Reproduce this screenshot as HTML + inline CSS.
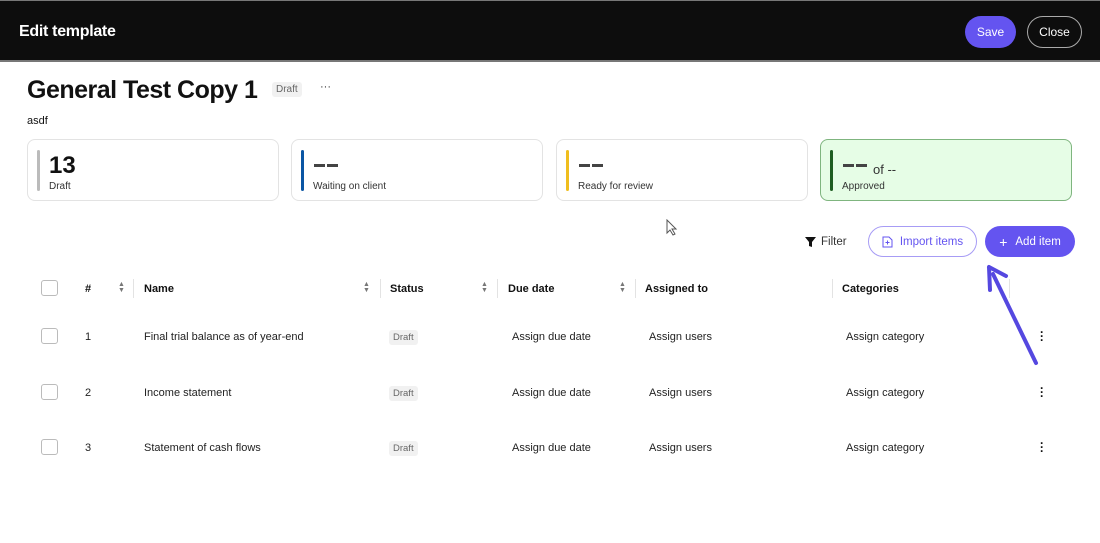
<!DOCTYPE html>
<html><head><style>
*{box-sizing:border-box;margin:0;padding:0}
body{width:1100px;height:543px;background:#fff;font-family:"Liberation Sans",sans-serif;color:#111;position:relative;overflow:hidden}
.hdr{position:absolute;left:0;top:0;width:1100px;height:62px;background:#0d0d0d;border-top:1px solid #777;border-bottom:2px solid #777}
.hdr h1{position:absolute;left:19px;top:22px;font-size:16px;color:#fff;font-weight:bold;letter-spacing:-0.3px}
.btn{position:absolute;border-radius:16px;font-size:12px;display:flex;align-items:center;justify-content:center}
.a{position:absolute}
.card{position:absolute;top:139px;width:252px;height:62px;border:1px solid #e3e3e3;border-radius:8px;background:#fff}
.card .bar{position:absolute;left:9px;top:10px;width:3px;height:41px;border-radius:2px}
.card .v{position:absolute;left:21px;top:12px;font-size:24px;font-weight:bold}
.card .l{position:absolute;left:21px;top:41px;font-size:10px;color:#333}
.dash{position:absolute;left:22px;top:24px;width:11px;height:3px;background:#444;box-shadow:13px 0 0 #444}
.th{position:absolute;top:283px;font-size:11px;font-weight:bold}
.cb{position:absolute;left:41px;width:17px;height:16px;border:1px solid #bbb;border-radius:3px}
.td{position:absolute;font-size:11px;color:#222}
.tag{position:absolute;left:389px;font-size:9.5px;color:#666;background:#f1f1f1;padding:2px 4px;border-radius:3px}
.sep{position:absolute;top:279px;width:1px;height:19px;background:#e3e3e3}
.sort{position:absolute;top:282px;font-size:7px;line-height:6px;color:#777}
.dots{position:absolute;left:1040px;font-size:12px;font-weight:bold;line-height:4px;width:4px;text-align:center}
</style></head><body>
<div class="hdr"><h1>Edit template</h1>
<div class="btn" style="left:965px;top:15px;width:51px;height:32px;background:#6454f0;color:#fff">Save</div>
<div class="btn" style="left:1027px;top:15px;width:55px;height:32px;border:1px solid #aaa;color:#fff">Close</div>
</div>
<div class="a" style="left:27px;top:76px;font-size:25px;font-weight:bold;letter-spacing:-0.5px">General Test Copy 1</div>
<div class="a" style="left:272px;top:82px;font-size:10px;color:#666;background:#f1f1f1;padding:2px 4px;border-radius:3px">Draft</div>
<div class="a" style="left:320px;top:81px;font-size:11px;color:#333">···</div>
<div class="a" style="left:27px;top:115px;font-size:11px">asdf</div>

<div class="card" style="left:27px"><div class="bar" style="background:#bbb"></div><div class="v">13</div><div class="l">Draft</div></div>
<div class="card" style="left:291px"><div class="bar" style="background:#0b56a4"></div><div class="dash"></div><div class="l">Waiting on client</div></div>
<div class="card" style="left:556px"><div class="bar" style="background:#f0be1e"></div><div class="dash"></div><div class="l">Ready for review</div></div>
<div class="card" style="left:820px;background:#e6fde6;border-color:#7fb57f"><div class="bar" style="background:#1e5d21"></div><div class="dash"></div><div class="a" style="left:52px;top:22px;font-size:13px;color:#333">of --</div><div class="l">Approved</div></div>

<svg class="a" style="left:665px;top:219px" width="14" height="18" viewBox="0 0 14 18"><path d="M2 1 L2 14 L5 11 L8 16 L10 15 L7 10 L11 10 Z" fill="#fff" stroke="#555"/></svg>

<svg class="a" style="left:805px;top:237px" width="11" height="10" viewBox="0 0 11 10"><path d="M0 0H11L7 5V10L4 9V5Z" fill="#111"/></svg>
<div class="a" style="left:821px;top:236px;font-size:11.5px;color:#333">Filter</div>
<div class="btn" style="left:868px;top:226px;width:109px;height:31px;border:1px solid #a79cf5;color:#6454f0;font-size:11.5px"><svg width="11" height="12" viewBox="0 0 11 12" style="margin-right:7px"><path d="M1 1H7L10 4V11H1Z M5.5 4.5V8.5 M3.5 6.5H7.5" fill="none" stroke="#6454f0"/></svg>Import items</div>
<div class="btn" style="left:985px;top:226px;width:90px;height:31px;background:#6454f0;color:#fff;font-size:11.5px"><span style="margin-right:8px;font-size:14px">+</span>Add item</div>

<svg class="a" style="left:980px;top:262px" width="60" height="110" viewBox="0 0 60 110"><path d="M56 101 L13 12" stroke="#5548e0" stroke-width="4" stroke-linecap="round"/><path d="M9 5 L10 28 M9 5 L26 14" stroke="#5548e0" stroke-width="4" stroke-linecap="round"/></svg>

<div class="cb" style="top:280px"></div>
<div class="th" style="left:85px">#</div><div class="sort" style="left:118px">▲<br>▼</div><div class="sep" style="left:133px"></div>
<div class="th" style="left:144px">Name</div><div class="sort" style="left:363px">▲<br>▼</div><div class="sep" style="left:380px"></div>
<div class="th" style="left:390px">Status</div><div class="sort" style="left:481px">▲<br>▼</div><div class="sep" style="left:497px"></div>
<div class="th" style="left:508px">Due date</div><div class="sort" style="left:619px">▲<br>▼</div><div class="sep" style="left:635px"></div>
<div class="th" style="left:645px">Assigned to</div><div class="sep" style="left:832px"></div>
<div class="th" style="left:842px">Categories</div><div class="sep" style="left:1009px"></div>

<div class="cb" style="top:328px"></div><div class="td" style="left:85px;top:331px">1</div><div class="td" style="left:144px;top:331px">Final trial balance as of year-end</div><div class="tag" style="top:330px">Draft</div><div class="td" style="left:512px;top:331px">Assign due date</div><div class="td" style="left:649px;top:331px">Assign users</div><div class="td" style="left:846px;top:331px">Assign category</div><div class="dots" style="top:330px">·<br>·<br>·</div>
<div class="cb" style="top:384px"></div><div class="td" style="left:85px;top:387px">2</div><div class="td" style="left:144px;top:387px">Income statement</div><div class="tag" style="top:386px">Draft</div><div class="td" style="left:512px;top:387px">Assign due date</div><div class="td" style="left:649px;top:387px">Assign users</div><div class="td" style="left:846px;top:387px">Assign category</div><div class="dots" style="top:386px">·<br>·<br>·</div>
<div class="cb" style="top:439px"></div><div class="td" style="left:85px;top:442px">3</div><div class="td" style="left:144px;top:442px">Statement of cash flows</div><div class="tag" style="top:441px">Draft</div><div class="td" style="left:512px;top:442px">Assign due date</div><div class="td" style="left:649px;top:442px">Assign users</div><div class="td" style="left:846px;top:442px">Assign category</div><div class="dots" style="top:441px">·<br>·<br>·</div>
</body></html>
